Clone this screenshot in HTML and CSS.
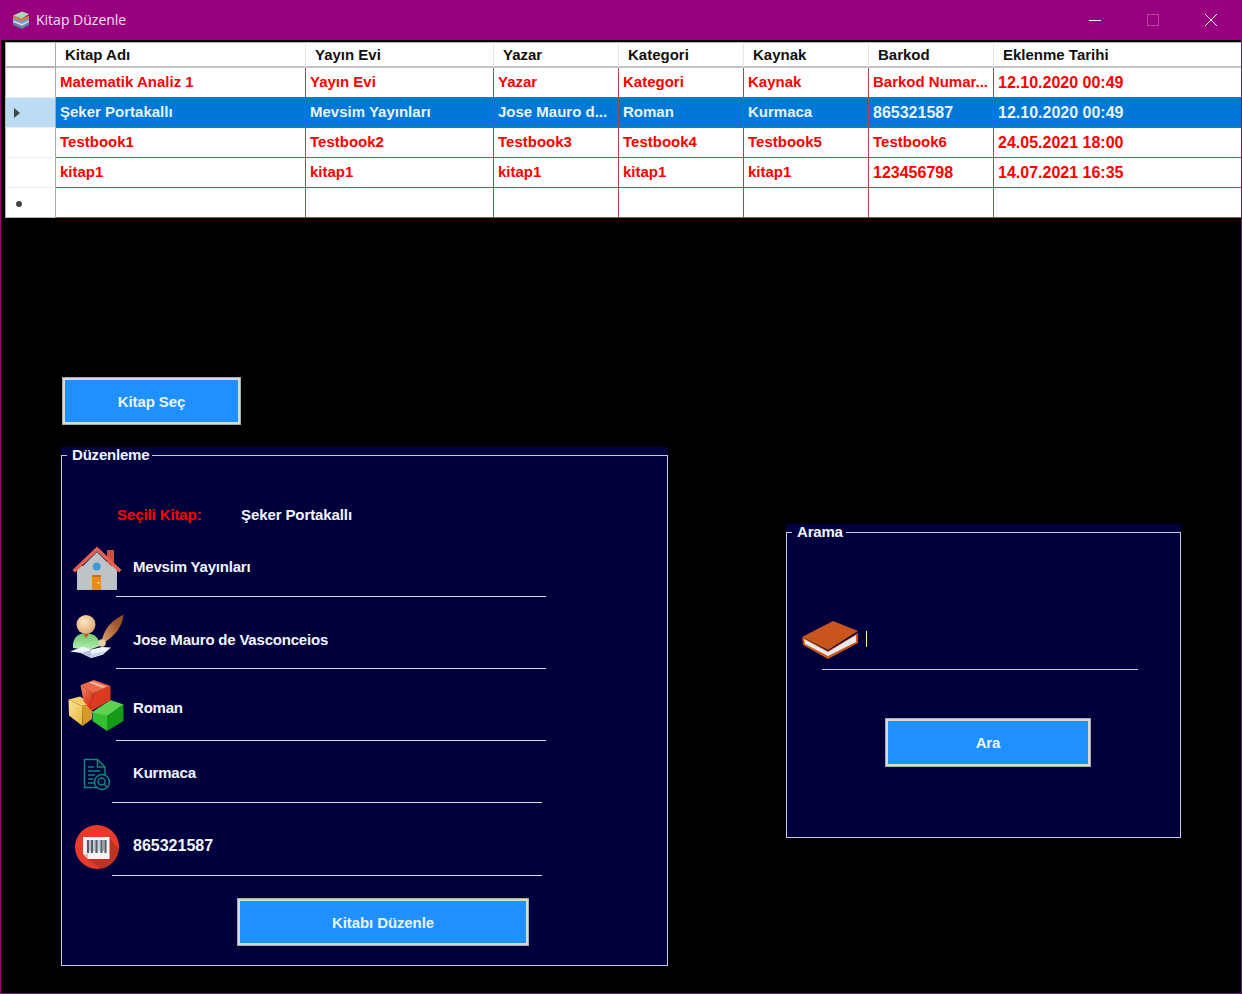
FILE: index.html
```html
<!doctype html>
<html lang="tr">

<head>
	<meta charset="UTF-8" />
	<meta name="viewport" content="width=device-width, initial-scale=1.0" />
	<title>Kitap Düzenle</title>
	<link rel="stylesheet" href="styles.css">
</head>

<body>
	<div class="window">
		<header class="titlebar">
			<svg class="title-icon" viewBox="0 0 18 18" width="18" height="18">
				<path d="M1 14 L10 18 L17 14 L17 11 L10 15 L1 11 Z" fill="#5f86ad" />
				<path d="M1 11 L10 15 L17 11 L17 9 L10 12.500 L1 9 Z" fill="#d5d9dd" />
				<path d="M1 9 L10 12.500 L17 9 L17 6.500 L10 10 L1 6.500 Z" fill="#7f9fbd" />
				<path d="M1 6.500 L10 10 L17 6.500 L17 4.500 L10 7.500 L1 4.500 Z" fill="#d9843f" />
				<path d="M1 4.500 L10 0.500 L17 3 L10 7.500 Z" fill="#a8dcae" />
			</svg>
			<span class="title-text">Kitap Düzenle</span>
			<div class="window-controls">
				<button class="control" type="button" aria-label="Simge durumuna küçült">
					<svg viewBox="0 0 12 12" width="12" height="12"><path d="M0 6.500 H12" stroke="#fff" fill="none" /></svg>
				</button>
				<button class="control" type="button" aria-label="Ekranı kapla">
					<svg viewBox="0 0 12 12" width="12" height="12"><rect x="0.5" y="0.5" width="11" height="11" stroke="#b04da0" fill="none" /></svg>
				</button>
				<button class="control" type="button" aria-label="Kapat">
					<svg viewBox="0 0 12 12" width="12" height="12"><path d="M0 0 L12 12 M12 0 L0 12" stroke="#fff" fill="none" /></svg>
				</button>
			</div>
		</header>

		<main class="content">
			<table class="book-grid">
				<colgroup>
					<col class="col-head">
					<col class="col-name">
					<col class="col-publisher">
					<col class="col-std">
					<col class="col-std">
					<col class="col-std">
					<col class="col-std">
					<col class="col-date">
				</colgroup>
				<thead>
					<tr>
						<th class="row-head"></th>
						<th>Kitap Adı</th>
						<th>Yayın Evi</th>
						<th>Yazar</th>
						<th>Kategori</th>
						<th>Kaynak</th>
						<th>Barkod</th>
						<th>Eklenme Tarihi</th>
					</tr>
				</thead>
				<tbody>
					<tr>
						<td class="row-head"></td>
						<td>Matematik Analiz 1</td>
						<td>Yayın Evi</td>
						<td>Yazar</td>
						<td>Kategori</td>
						<td>Kaynak</td>
						<td>Barkod Numar...</td>
						<td class="num">12.10.2020 00:49</td>
					</tr>
					<tr class="selected">
						<td class="row-head"><span class="row-arrow"></span></td>
						<td>Şeker Portakallı</td>
						<td>Mevsim Yayınları</td>
						<td>Jose Mauro d...</td>
						<td>Roman</td>
						<td>Kurmaca</td>
						<td class="num">865321587</td>
						<td class="num">12.10.2020 00:49</td>
					</tr>
					<tr>
						<td class="row-head"></td>
						<td>Testbook1</td>
						<td>Testbook2</td>
						<td>Testbook3</td>
						<td>Testbook4</td>
						<td>Testbook5</td>
						<td>Testbook6</td>
						<td class="num">24.05.2021 18:00</td>
					</tr>
					<tr>
						<td class="row-head"></td>
						<td>kitap1</td>
						<td>kitap1</td>
						<td>kitap1</td>
						<td>kitap1</td>
						<td>kitap1</td>
						<td class="num">123456798</td>
						<td class="num">14.07.2021 16:35</td>
					</tr>
					<tr>
						<td class="row-head"><span class="row-new"></span></td>
						<td></td>
						<td></td>
						<td></td>
						<td></td>
						<td></td>
						<td></td>
						<td></td>
					</tr>
				</tbody>
			</table>

			<div class="workspace">
				<div class="left-col">
					<button class="action-btn btn-select" type="button">Kitap Seç</button>

					<div class="panel panel-edit">
						<fieldset class="panel-box">
							<legend>Düzenleme</legend>

							<div class="selected-book">
								<span class="selected-label">Seçili Kitap:</span>
								<span>Şeker Portakallı</span>
							</div>

							<div class="field field-publisher">
								<div class="field-slot">
									<svg class="field-icon" viewBox="0 0 50 46" width="50" height="46">
										<rect x="35" y="4" width="7" height="16" fill="#c8503f" />
										<rect x="5" y="20" width="40" height="24" fill="#bdc3c7" />
										<path d="M25 6 L44 25 H6 Z" fill="#bdc3c7" />
										<path d="M25 0.5 L49.5 24 L47 26.5 L25 5.5 L3 26.5 L0.5 24 Z" fill="#e5604d" />
										<circle cx="24.7" cy="20.5" r="4" fill="#3d9ad9" />
										<rect x="20" y="29" width="9" height="15" fill="#e98a1f" />
										<rect x="20" y="29" width="9" height="2" fill="#c96f12" />
										<rect x="25.5" y="36" width="2" height="1.5" fill="#ffe08a" />
									</svg>
								</div>
								<span class="field-text">Mevsim Yayınları</span>
							</div>
							<div class="field-line"></div>

							<div class="field field-author">
								<div class="field-slot">
									<svg class="field-icon" viewBox="0 0 56 46" width="56" height="46">
										<defs>
											<radialGradient id="headShade" cx="0.4" cy="0.35" r="0.7">
												<stop offset="0" stop-color="#ffe6c4" />
												<stop offset="1" stop-color="#dca56c" />
											</radialGradient>
											<linearGradient id="quillShade" x1="0" y1="1" x2="1" y2="0">
												<stop offset="0" stop-color="#d9a273" />
												<stop offset="0.6" stop-color="#a85c30" />
												<stop offset="1" stop-color="#8c4a26" />
											</linearGradient>
											<linearGradient id="bodyShade" x1="0" y1="0" x2="0" y2="1">
												<stop offset="0" stop-color="#6fc46e" />
												<stop offset="1" stop-color="#b4f0ae" />
											</linearGradient>
										</defs>
										<path d="M4 35 Q3 21 17 20 Q30 21 31 33 L20 37 Z" fill="url(#bodyShade)" />
										<path d="M14.500 20 H20 L17 25 Z" fill="#d8402a" />
										<circle cx="17" cy="11.500" r="9.500" fill="url(#headShade)" />
										<path d="M33 27 Q36 11 54.500 1.500 Q53 18 36 29 Z" fill="url(#quillShade)" />
										<circle cx="33" cy="30" r="3.800" fill="#e6cfa6" />
										<path d="M1 38.500 L14 33.500 L22 36.500 L33 34 L42 34.500 L34 41.500 L22 45 L12 40 Z" fill="#eef2fb" />
										<path d="M12 40 L22 45 L22 37 Z" fill="#b9c4dc" />
										<path d="M22 45 L34 41.500 L36 38 L22 41 Z" fill="#ccd6ea" />
									</svg>
								</div>
								<span class="field-text">Jose Mauro de Vasconceios</span>
							</div>
							<div class="field-line"></div>

							<div class="field field-category">
								<div class="field-slot">
									<svg class="field-icon" viewBox="0 0 56 51" width="56" height="51">
										<defs>
											<linearGradient id="yellowShade" x1="0" y1="0" x2="1" y2="1">
												<stop offset="0" stop-color="#fbe39a" />
												<stop offset="1" stop-color="#e8b63a" />
											</linearGradient>
											<linearGradient id="redShade" x1="0" y1="0" x2="0.6" y2="1">
												<stop offset="0" stop-color="#f58a62" />
												<stop offset="1" stop-color="#d42a1a" />
											</linearGradient>
										</defs>
										<path d="M0.500 19.500 L12 16.500 L24 24 L14 26 Z" fill="#f4cf6a" />
										<path d="M0.500 19.500 L14 26 L14.500 46 L1 35.500 Z" fill="url(#yellowShade)" />
										<path d="M14 26 L24 24 V39 L14.500 46 Z" fill="#d79a24" />
										<path d="M24.500 31 L39 36 V51 L24.500 41 Z" fill="#35c030" />
										<path d="M39 36 L55.500 24.500 V41 L39 51 Z" fill="#159a1a" />
										<path d="M23.500 32.500 L42.500 20 L55.500 24.500 L39 36 Z" fill="#5fd152" />
										<path d="M12.500 5 L24.500 13.500 L23.500 31 L15.500 21 Z" fill="url(#redShade)" />
										<path d="M24.500 13.500 L42.500 6 V20 L23.500 31 Z" fill="#dc3a20" />
										<path d="M12.500 5 L26 0 L42.500 6 L24.500 13.500 Z" fill="#ec6a48" />
										<path d="M21 2.500 L24.500 1.500 L38 6.500 L34.500 8 Z" fill="#f5b49c" />
									</svg>
								</div>
								<span class="field-text">Roman</span>
							</div>
							<div class="field-line"></div>

							<div class="field field-source">
								<div class="field-slot">
									<svg class="field-icon" viewBox="0 0 28 33" width="28" height="33" fill="none" stroke="#128577" stroke-width="1.5">
										<path d="M14 29.500 H1.500 V1.500 H14.500 L22 9 V17" />
										<path d="M14.500 1.500 V9 H22" />
										<path d="M5 9 H11 M5 13 H17 M5 17 H12 M5 21 H10 M5 25 H11" />
										<circle cx="19" cy="24" r="7.500" />
										<circle cx="18.500" cy="23.500" r="3.500" />
										<path d="M21 26 L24 29" />
									</svg>
								</div>
								<span class="field-text">Kurmaca</span>
							</div>
							<div class="field-line field-line-short"></div>

							<div class="field field-barcode">
								<div class="field-slot">
									<svg class="field-icon" viewBox="0 0 44 44" width="44" height="44">
										<circle cx="22" cy="22" r="22" fill="#e9392a" />
										<path d="M34 12 L43.500 24 A22 22 0 0 1 26 43.600 L12 34 Z" fill="#bd3222" />
										<path d="M8 12 H34.500 V34 H13 L8 29 Z" fill="#f4f4f4" />
										<path d="M8 29 L13 29 V34 Z" fill="#c8c8c8" />
										<path d="M13 15 V28 M17 15 V28 M21.500 15 V28 M26.500 15 V28 M30.500 15 V28" stroke="#535c69" stroke-width="2.200" />
										<path d="M15 15 V26 M19.200 15 V26 M24 15 V26 M28.500 15 V26" stroke="#9aa3ae" stroke-width="1" />
									</svg>
								</div>
								<span class="field-text field-text-num">865321587</span>
							</div>
							<div class="field-line field-line-short"></div>

							<button class="action-btn btn-edit" type="button">Kitabı Düzenle</button>
						</fieldset>
					</div>
				</div>

				<div class="panel panel-search">
					<fieldset class="panel-box">
						<legend>Arama</legend>

						<div class="search-row">
							<svg class="search-icon" viewBox="0 0 57 38" width="57" height="38">
								<path d="M0 16 L26 30 L56 12 V22 L26 38 L1 24 Z" fill="#c9551d" />
								<path d="M2 18 L26 31 L54 14 V21 L26 35 L3 23 Z" fill="#e9e9e9" />
								<path d="M0 16 L31 0 L56 10 L26 29 Z" fill="#c9551d" />
							</svg>
							<span class="caret"></span>
						</div>
						<div class="search-line"></div>

						<button class="action-btn btn-search" type="button">Ara</button>
					</fieldset>
				</div>
			</div>
		</main>
	</div>
</body>

</html>
```

FILE: styles.css
```css
html,
body {
	margin: 0;
	overflow: hidden;
}

body {
	font-family: "Liberation Sans", Arial, sans-serif;
	font-size: 15px;
	font-weight: bold;
	background-color: #000;
}

.window {
	box-sizing: border-box;
	height: 994px;
	border: 1px solid #99007f;
	background-color: #000;
}

.titlebar {
	display: flex;
	align-items: center;
	box-sizing: border-box;
	height: 39px;
	padding: 0 1px 2px 11px;
	background-color: #99007f;
}

.title-icon {
	margin-right: 6px;
}

.title-text {
	font-family: "Open Sans", sans-serif;
	font-size: 14px;
	font-weight: normal;
	color: #f3e3f1;
}

.window-controls {
	display: flex;
	margin-left: auto;
}

.control {
	display: flex;
	align-items: center;
	justify-content: center;
	width: 58px;
	height: 37px;
	padding: 0;
	border: none;
	background: none;
}

.content {
	padding-top: 2px;
}

/* grid */
.book-grid {
	table-layout: fixed;
	width: 1236px;
	margin-left: 4px;
	border-collapse: separate;
	border-spacing: 0;
	background-color: #fff;
}

.col-head {
	width: 51px;
}

.col-name {
	width: 250px;
}

.col-publisher {
	width: 188px;
}

.col-std {
	width: 125px;
}

.col-date {
	width: 247px;
}

.book-grid th {
	box-sizing: border-box;
	height: 26px;
	padding: 0 0 0 9px;
	border-top: 1px solid #b4b4b4;
	border-right: 1px solid #e6e6e6;
	border-bottom: 2px solid #c4c4c4;
	color: #111;
	text-align: left;
}

.book-grid th:last-child {
	border-right: none;
}

.book-grid td {
	box-sizing: border-box;
	height: 30px;
	padding: 0 4px 2px;
	border-right: 1px solid #a44a4a;
	border-bottom: 1px solid #a44a4a;
	color: #ff0000;
	white-space: nowrap;
}

.book-grid td:last-child {
	border-right: none;
}

.book-grid td.num {
	padding-bottom: 0;
	font-size: 16px;
}

.book-grid .row-head {
	padding: 0;
	border-left: 1px solid #b4b4b4;
	border-right: 1px solid #a8a8a8;
	border-bottom-color: #ececec;
	background-color: #fff;
}

.book-grid tr:last-child .row-head {
	border-bottom-color: #b4b4b4;
}

.selected td {
	background-color: #0078d7;
	color: #e8f3fc;
}

.book-grid .selected .row-head {
	background-color: #bbdcf3;
}

.row-arrow {
	display: block;
	width: 0;
	height: 0;
	margin-left: 8px;
	border-top: 5px solid transparent;
	border-bottom: 5px solid transparent;
	border-left: 6px solid #444;
}

.row-new {
	display: block;
	width: 6px;
	height: 6px;
	margin: 2px 0 0 10px;
	border-radius: 50%;
	background-color: #444;
}

/* lower area */
.workspace {
	display: grid;
	grid-template-columns: 607px 395px;
	column-gap: 118px;
	align-items: start;
	margin-top: 159px;
	padding-left: 60px;
}

.action-btn {
	display: block;
	box-sizing: border-box;
	border: 3px solid #d9d9d9;
	outline: 1px solid #ababab;
	outline-offset: -1px;
	background-color: #1e90ff;
	color: #eaf4ff;
	font-family: inherit;
	font-size: 15px;
	font-weight: bold;
	letter-spacing: -0.1px;
}

.btn-select {
	width: 179px;
	height: 48px;
	margin-left: 1px;
}

.btn-edit {
	width: 292px;
	height: 48px;
	margin: 22px 0 0 175px;
}

.btn-search {
	width: 206px;
	height: 49px;
	margin: 48px 0 0 98px;
}

.panel {
	box-sizing: border-box;
	background-color: #00003c;
	color: #f2f5ff;
}

.panel-edit {
	height: 519px;
	margin-top: 22px;
}

.panel-search {
	height: 314px;
	margin-top: 147px;
}

.panel-box {
	box-sizing: border-box;
	height: 100%;
	min-width: 0;
	margin: 0;
	padding: 0;
	border: 1px solid #c9c9dc;
}

.panel-box legend {
	margin-left: 5px;
	padding: 0 3px 0 5px;
	line-height: 16px;
	letter-spacing: -0.2px;
}

.selected-book {
	display: flex;
	margin: 42px 0 13px 55px;
	line-height: 20px;
	letter-spacing: -0.1px;
}

.selected-label {
	width: 124px;
	color: #ff0000;
}

.field {
	display: flex;
	align-items: flex-start;
	line-height: 20px;
}

.field-slot {
	display: flex;
	justify-content: center;
	width: 70px;
	margin-right: 1px;
}

.field-icon {
	display: block;
	flex-shrink: 0;
}

.field-text {
	letter-spacing: -0.2px;
}

.field-text-num {
	font-size: 16px;
	letter-spacing: 0;
}

.field-publisher {
	height: 58px;
}

.field-publisher .field-icon {
	margin-top: 8px;
}

.field-publisher .field-text {
	margin-top: 19px;
}

.field-author {
	height: 71px;
}

.field-author .field-icon {
	margin-top: 16px;
}

.field-author .field-text {
	margin-top: 33px;
}

.field-category {
	height: 71px;
}

.field-category .field-icon {
	margin: 11px 0 0 -2px;
}

.field-category .field-text {
	margin-top: 29px;
}

.field-source {
	height: 61px;
}

.field-source .field-icon {
	margin-top: 17px;
}

.field-source .field-text {
	margin-top: 22px;
}

.field-barcode {
	height: 72px;
}

.field-barcode .field-icon {
	margin-top: 22px;
}

.field-barcode .field-text {
	margin-top: 33px;
}

.field-line {
	width: 430px;
	height: 1px;
	margin-left: 54px;
	background-color: #dcdcea;
}

.field-line-short {
	margin-left: 50px;
}

.search-row {
	display: flex;
	align-items: flex-start;
	margin: 81px 0 0 15px;
}

.search-icon {
	display: block;
}

.caret {
	width: 1px;
	height: 16px;
	margin: 10px 0 0 7px;
	background-color: #ffefb0;
}

.search-line {
	width: 316px;
	height: 1px;
	margin: 10px 0 0 35px;
	background-color: #c9c9da;
}
```
